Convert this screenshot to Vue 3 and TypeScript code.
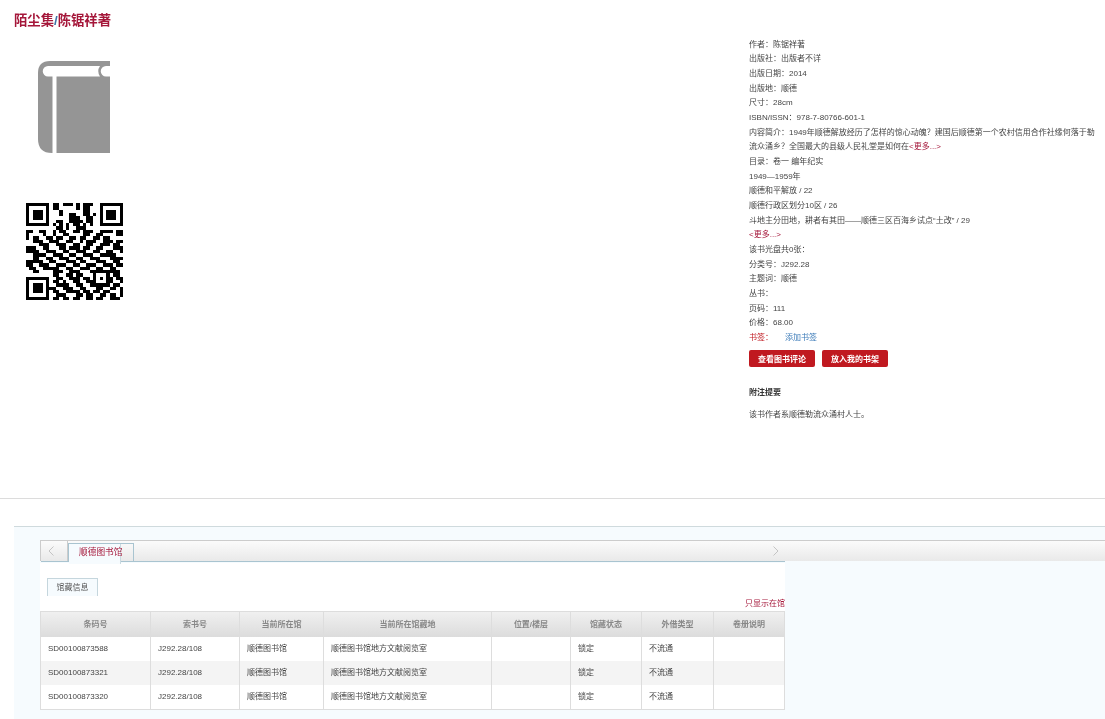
<template>
  <div class="page">
    <section class="book">
      <div class="cover-col">
        <h1 class="title">陌尘集<i>/</i>陈锯祥著</h1>
        <svg class="cover" viewBox="0 0 72 92" width="72" height="92">
          <path d="M72 0H12Q0 0 0 12V78Q0 92 14 92H72Z" fill="#959595" />
          <path d="M10 5H62Q58.500 10 62 15.500H10A5 5 0 0 1 10 5Z" fill="#fff" />
          <path d="M72 5H68A5 5 0 0 0 68 15.500H72Z" fill="#fff" />
          <rect x="14.500" y="15" width="4" height="77" fill="#fff" />
        </svg>
        <svg class="qr" viewBox="0 0 29 29" width="97" height="97" shape-rendering="crispEdges">
          <path :d="qrPath" fill="#000" />
        </svg>
      </div>
      <div class="info">
        <p v-for="line in infoLines" :key="line">{{ line }}</p>
        <p>
          内容简介：1949年顺德解放经历了怎样的惊心动魄？建国后顺德第一个农村信用合作社缘何落于勒流众涌乡？全国最大的县级人民礼堂是如何在<a class="more">&lt;更多...&gt;</a>
        </p>
        <p v-for="line in tocLines" :key="line">{{ line }}</p>
        <p><a class="more">&lt;更多...&gt;</a></p>
        <p v-for="line in restLines" :key="line">{{ line }}</p>
        <p class="bookmark"><span>书签：</span><a>添加书签</a></p>
        <div class="actions">
          <button>查看图书评论</button>
          <button>放入我的书架</button>
        </div>
        <h2>附注提要</h2>
        <p class="note">该书作者系顺德勒流众涌村人士。</p>
      </div>
    </section>

    <section class="holdings">
      <div class="tabbar">
        <div class="tabbar-main">
          <span class="arrow">
            <svg width="6" height="10" viewBox="0 0 6 10"><path d="M5.500 .5L1 5l4.500 4.500" /></svg>
          </span>
          <span class="lib-tab"><b></b><em>顺德图书馆</em></span>
          <span class="arrow next">
            <svg width="6" height="10" viewBox="0 0 6 10"><path d="M.5 .5L5 5 .5 9.500" /></svg>
          </span>
        </div>
      </div>
      <div class="sheet">
        <div class="sub-tabs"><span>馆藏信息</span></div>
        <div class="only"><a>只显示在馆</a></div>
        <div class="grid">
          <div class="row head">
            <div v-for="h in headers" :key="h" class="cell">{{ h }}</div>
          </div>
          <div v-for="code in barcodes" :key="code" class="row">
            <div class="cell">{{ code }}</div>
            <div class="cell">J292.28/108</div>
            <div class="cell">顺德图书馆</div>
            <div class="cell">顺德图书馆地方文献阅览室</div>
            <div class="cell"></div>
            <div class="cell">锁定</div>
            <div class="cell">不流通</div>
            <div class="cell"></div>
          </div>
        </div>
      </div>
    </section>
  </div>
</template>

<script setup lang="ts">
const infoLines = [
  '作者：陈锯祥著',
  '出版社：出版者不详',
  '出版日期：2014',
  '出版地：顺德',
  '尺寸：28cm',
  'ISBN/ISSN：978-7-80766-601-1'
]
const tocLines = [
  '目录：卷一 编年纪实',
  '1949—1959年',
  '顺德和平解放 / 22',
  '顺德行政区划分10区 / 26',
  '斗地主分田地，耕者有其田——顺德三区百海乡试点“土改” / 29'
]
const restLines = ['该书光盘共0张：', '分类号：J292.28', '主题词：顺德', '丛书：', '页码：111', '价格：68.00']
const headers = ['条码号', '索书号', '当前所在馆', '当前所在馆藏地', '位置/楼层', '馆藏状态', '外借类型', '卷册说明']
const barcodes = ['SD00100873588', 'SD00100873321', 'SD00100873320']

const qrRows = [
  '11111110110111010111001111111',
  '10000010110000010110001000001',
  '10111010001000000110001011101',
  '10111010001001100110101011101',
  '10111010000001110011001011101',
  '10000010011001111011001000001',
  '11111110101010110101001111111',
  '00000000011010011100000000000',
  '11001100101100110111001111011',
  '10000100100110000110011000011',
  '10110011011001101100110110000',
  '00111001110011001011100111011',
  '00001110011100110011001110110',
  '11100110001101110110011000111',
  '11110011100110011100110011001',
  '00111100111001100111001111100',
  '00110011001110011001110001111',
  '11111001100011101100011100110',
  '11001110011100110011100111011',
  '01100111110011001110011001100',
  '00110000111001110001111111110',
  '00000000110011011000100010110',
  '11111110011001110110101011011',
  '10000010110100110011100011001',
  '10111010011110011001111110110',
  '10111011100111001100011001101',
  '10111010110011110110110110001',
  '10000010011100011011001101101',
  '11111110110110110011011001110'
]

// one 1x1 square per dark module
const qrPath = qrRows
  .flatMap((row, y) => [...row].map((c, x) => (c === '1' ? `M${x} ${y}h1v1h-1z` : '')))
  .join('')
</script>

<style>
html, body { margin: 0; background: #fff; }
</style>

<style scoped>
.page {
  width: 1105px;
  height: 719px;
  overflow: hidden;
  font-family: "Liberation Sans", "Noto Sans CJK SC", sans-serif;
  font-size: 8px;
  color: #444;
  filter: blur(0.3px);
}

.book {
  display: flex;
  height: 498px;
  border-bottom: 1px solid #dcdcdc;
}

.cover-col { width: 749px; }

.title {
  margin: 0;
  padding: 12px 0 0 14px;
  font-size: 13.333px;
  line-height: 18px;
  font-weight: bold;
  color: #a5173a;
}
.title i { font-style: normal; color: #3f74a8; }

.cover { display: block; margin: 31px 0 0 38px; }
.qr { display: block; margin: 50px 0 0 26px; }

.info { width: 347px; padding-top: 37.500px; }
.info p { margin: 0; line-height: 14.667px; }

.more { color: #a5173a; }

.bookmark span { color: #c01920; display: inline-block; width: 36px; }
.bookmark a { color: #3a7ab8; }

.actions { display: flex; gap: 7px; margin-top: 4.500px; }
.actions button {
  width: 66px;
  height: 17px;
  padding: 0;
  border: 0;
  border-radius: 2px;
  background: #c01920;
  color: #fff;
  font: bold 8px "Liberation Sans", "Noto Sans CJK SC", sans-serif;
}

.info h2 {
  margin: 19px 0 0;
  font-size: 8px;
  line-height: 14.667px;
  color: #333;
}
.info .note { margin-top: 7px; }

.holdings {
  margin: 27px 0 0 14px;
  height: 193px;
  box-sizing: border-box;
  padding: 13px 0 0 26px;
  border-top: 1px solid #cfdadd;
  background: #f6fbfe;
}

.tabbar {
  height: 21px;
  box-sizing: border-box;
  border-top: 1px solid #ccc;
  border-left: 1px solid #ccc;
  background: linear-gradient(#fbfbfb, #e9e9e9);
}
.tabbar-main {
  position: relative;
  display: flex;
  width: 744px;
  height: 20px;
  border-bottom: 1px solid #a9c4d0;
}

.arrow {
  display: flex;
  align-items: center;
  justify-content: center;
  width: 27px;
  height: 20px;
  box-sizing: border-box;
  padding-right: 7px;
  border-right: 1px solid #ccc;
}
.arrow svg { fill: none; stroke: #c4c4c4; }
.arrow.next {
  position: absolute;
  right: 0;
  width: 18px;
  padding-right: 0;
  border: 0;
}

.lib-tab {
  position: relative;
  width: 66px;
  height: 19px;
  margin-top: 2px;
  box-sizing: border-box;
  border: 1px solid #a9c4d0;
  border-bottom: 0;
  line-height: 17px;
}
.lib-tab b {
  position: absolute;
  left: 0;
  top: 0;
  bottom: -2px;
  width: 51px;
  background: #f6fbfe;
  border-right: 1px solid #c9d9e0;
}
.lib-tab em {
  position: relative;
  display: block;
  margin-left: 10px;
  font-style: normal;
  font-size: 8.700px;
  white-space: nowrap;
  color: #a5173a;
}

.sheet {
  width: 745px;
  padding-top: 2px;
  background: linear-gradient(#f6fbfe 2px, #fff 2px);
}

.sub-tabs { padding: 15px 0 0 7px; }
.sub-tabs span {
  display: block;
  width: 51px;
  height: 18px;
  box-sizing: border-box;
  border: 1px solid #c5d6dd;
  border-bottom: 0;
  background: #f6fbfe;
  color: #555;
  text-align: center;
  line-height: 17px;
}

.only {
  height: 15px;
  line-height: 16px;
  text-align: right;
  color: #a5173a;
}

.grid {
  border: 1px solid #ddd;
  width: 745px;
  box-sizing: border-box;
}

.row {
  display: grid;
  grid-template-columns: 110px 89px 84px 168px 79px 71px 72px 1fr;
  height: 24px;
  line-height: 24px;
  background: #fff;
}
.row:nth-child(odd) { background: #f4f4f4; }

.cell {
  padding-left: 7px;
  border-right: 1px solid #ddd;
  box-sizing: border-box;
  white-space: nowrap;
  overflow: hidden;
}
.cell:last-child { border-right: 0; }

.row.head {
  height: 25px;
  line-height: 25px;
  background: linear-gradient(#f0f0f0, #dcdcdc);
  color: #888;
  font-weight: bold;
}
.row.head .cell { padding: 0; text-align: center; }
</style>
